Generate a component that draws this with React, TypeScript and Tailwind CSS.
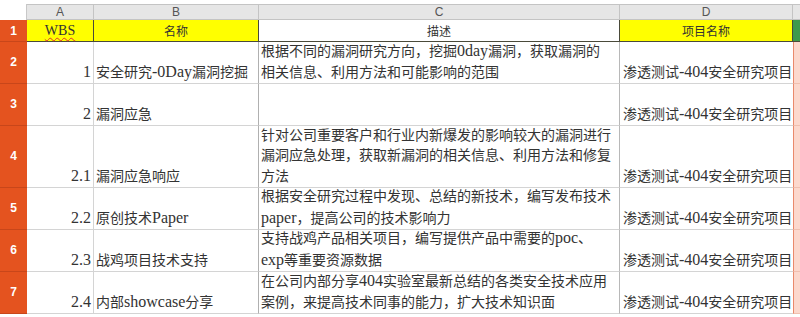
import React from "react";

const FONT = "font-['Liberation_Serif','Noto_Sans_CJK_SC',serif]";

function T({ s }: { s: string }) {
  const parts = s.split(/([\x20-\x7e]+)/).filter((p) => p.length > 0);
  return (
    <>
      {parts.map((p, i) =>
        /^[\x20-\x7e]+$/.test(p) ? (
          <span key={i} className="text-[16px]">
            {p}
          </span>
        ) : (
          <span key={i}>{p}</span>
        )
      )}
    </>
  );
}

type Row = {
  n: string;
  h: string;
  wbs: string;
  name: string;
  desc: string[];
};

const rows: Row[] = [
  {
    n: "2",
    h: "h-[42px]",
    wbs: "1",
    name: "安全研究-0Day漏洞挖掘",
    desc: ["根据不同的漏洞研究方向，挖掘0day漏洞，获取漏洞的", "相关信息、利用方法和可能影响的范围"],
  },
  { n: "3", h: "h-[42px]", wbs: "2", name: "漏洞应急", desc: [] },
  {
    n: "4",
    h: "h-[62px]",
    wbs: "2.1",
    name: "漏洞应急响应",
    desc: [
      "针对公司重要客户和行业内新爆发的影响较大的漏洞进行",
      "漏洞应急处理，获取新漏洞的相关信息、利用方法和修复",
      "方法",
    ],
  },
  {
    n: "5",
    h: "h-[42px]",
    wbs: "2.2",
    name: "原创技术Paper",
    desc: ["根据安全研究过程中发现、总结的新技术，编写发布技术", "paper，提高公司的技术影响力"],
  },
  {
    n: "6",
    h: "h-[42px]",
    wbs: "2.3",
    name: "战鸡项目技术支持",
    desc: ["支持战鸡产品相关项目，编写提供产品中需要的poc、", "exp等重要资源数据"],
  },
  {
    n: "7",
    h: "h-[42px]",
    wbs: "2.4",
    name: "内部showcase分享",
    desc: ["在公司内部分享404实验室最新总结的各类安全技术应用", "案例，来提高技术同事的能力，扩大技术知识面"],
  },
];

export default function App() {
  return (
    <div className="w-[800px] h-[317px] bg-white overflow-hidden pt-[4px] text-[#222]">
      {/* column header */}
      <div className="flex h-[16px]">
        <div className="w-[27px] shrink-0 bg-white border-r border-[#c8c8c8]" />
        {[
          ["A", "w-[67px]"],
          ["B", "w-[165px]"],
          ["C", "w-[361px]"],
          ["D", "w-[173px]"],
        ].map(([l, w]) => (
          <div
            key={l}
            className={`${w} shrink-0 bg-[#e6e6e6] border-r border-b border-t border-[#c4c4c4] flex items-center justify-center text-[12px] leading-none text-[#555] font-['Liberation_Sans',sans-serif]`}
          >
            {l}
          </div>
        ))}
        <div className="flex-1 bg-[#e6e6e6] border-b border-t border-[#c4c4c4]" />
      </div>

      {/* row 1 */}
      <div className="flex h-[22px]">
        <div className="w-[27px] shrink-0 bg-[#e4531f] border-b border-[#c8461a] flex items-center justify-center text-[12px] font-bold text-white font-['Liberation_Sans',sans-serif]">
          1
        </div>
        <div className="w-[67px] shrink-0 bg-[#ffff00] border-r border-b border-[#4a4a3a] flex items-center justify-center">
          <span className="font-['Liberation_Serif',serif] text-[14px] text-[#333] underline decoration-wavy decoration-[#e03030] decoration-1 underline-offset-2">
            WBS
          </span>
        </div>
        <div className="w-[165px] shrink-0 bg-[#ffff00] border-r border-b border-[#4a4a3a] flex items-center justify-center text-[12px] text-[#333] font-['Noto_Sans_CJK_SC',sans-serif]">
          名称
        </div>
        <div className="w-[361px] shrink-0 bg-white border-r border-b border-[#4a4a3a] flex items-center justify-center text-[12px] text-[#333] font-['Noto_Sans_CJK_SC',sans-serif]">
          描述
        </div>
        <div className="w-[173px] shrink-0 bg-[#ffff00] border-r border-b border-[#4a4a3a] flex items-center justify-center text-[12px] text-[#333] font-['Noto_Sans_CJK_SC',sans-serif]">
          项目名称
        </div>
        <div className="flex-1 bg-[#3f9a4c] border-b border-[#4a4a3a]" />
      </div>

      {/* data rows */}
      {rows.map((r) => (
        <div key={r.n} className={`flex ${r.h} ${FONT} text-[14px] leading-[20.5px] text-[#333]`}>
          <div className="w-[27px] shrink-0 bg-[#e4531f] border-b border-[#c8461a] flex items-center justify-center text-[12px] font-bold text-white font-['Liberation_Sans',sans-serif]">
            {r.n}
          </div>
          <div className="w-[67px] shrink-0 border-r border-b border-[#d4d4d4] flex flex-col justify-end items-end pr-[2px] overflow-hidden whitespace-nowrap">
            <div>
              <T s={r.wbs} />
            </div>
          </div>
          <div className="w-[165px] shrink-0 border-r border-b border-[#d4d4d4] border-r-[#b0b0b0] flex flex-col justify-end pl-[2px] overflow-hidden whitespace-nowrap">
            <div>
              <T s={r.name} />
            </div>
          </div>
          <div className="w-[361px] shrink-0 border-r border-b border-[#d4d4d4] border-r-[#b8b8b8] flex flex-col justify-end pl-[2px] overflow-hidden whitespace-nowrap">
            {r.desc.map((d, i) => (
              <div key={i}>
                <T s={d} />
              </div>
            ))}
          </div>
          <div className="w-[173px] shrink-0 border-b border-[#d4d4d4] flex flex-col justify-end pl-[3px] overflow-hidden whitespace-nowrap">
            <div>
              <T s="渗透测试-404安全研究项目" />
            </div>
          </div>
          <div className="flex-1 bg-[#fcd8cd] border-l border-l-[#e98a6c] border-b border-b-[#f0c0b0]" />
        </div>
      ))}
    </div>
  );
}
